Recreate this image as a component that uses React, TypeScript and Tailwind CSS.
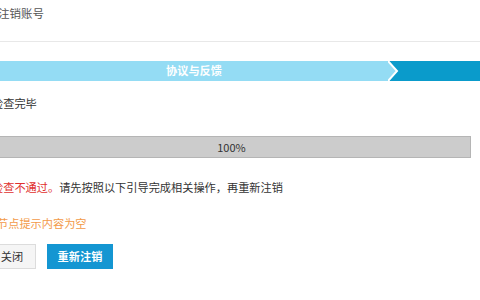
import React from "react";

export default function App() {
  return (
    <div
      className="w-[480px] h-[300px] overflow-hidden bg-white text-[#333]"
      style={{ fontFamily: '"Noto Sans CJK SC", "Liberation Sans", sans-serif' }}
    >
      <div className="h-[42px] border-b border-[#e8e8e8] ml-[-2px] flex items-start pt-[4px] text-[11.5px] leading-[18px] text-[#555]">
        注销账号
      </div>
      <div className="mt-[19px] h-[20px] flex">
        <div className="flex-1 bg-[#94dcf4] flex items-center justify-center text-white text-[11.2px] font-bold leading-none">
          协议与反馈
        </div>
        <svg width="12" height="20" viewBox="0 0 12 20" className="block shrink-0">
          <rect x="0" y="0" width="12" height="20" fill="#0a9bcb" />
          <polygon points="0,0 0,20 1,20 9,10 1,0" fill="#94dcf4" />
          <polyline points="0,0 9,10 0,20" fill="none" stroke="#ffffff" strokeWidth="2" />
        </svg>
        <div className="w-[80px] bg-[#0a9bcb]" />
      </div>
      <div className="ml-[-8px] mt-[13px] text-[11.2px] leading-[18px]">检查完毕</div>
      <div className="ml-[-8px] mr-[9px] mt-[24px] h-[22px] bg-[#cccccc] border border-[#b5b5b5] flex items-center justify-center text-[11px] text-[#333]">
        100%
      </div>
      <div className="ml-[-8px] mt-[20px] text-[11.2px] leading-[18px] whitespace-nowrap">
        <span className="text-[#e0302e]">检查不通过。</span>请先按照以下引导完成相关操作，再重新注销
      </div>
      <div className="ml-[-3px] mt-[18px] text-[11.2px] leading-[18px] text-[#f39a48]">节点提示内容为空</div>
      <div className="ml-[-12px] mt-[12px] flex gap-[11px]">
        <button className="w-[48px] h-[25px] bg-[#f5f5f5] border border-[#dcdcdc] text-[11.2px] text-[#333]">
          关闭
        </button>
        <button className="w-[66px] h-[25px] bg-[#1496d2] text-white text-[11.2px] font-bold">
          重新注销
        </button>
      </div>
    </div>
  );
}
